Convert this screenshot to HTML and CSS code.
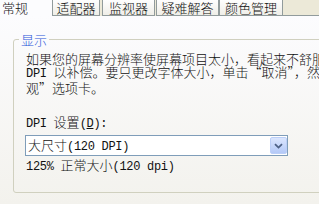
FILE: index.html
```
<!DOCTYPE html>
<html lang="zh-CN">
<head>
<meta charset="utf-8">
<link rel="stylesheet" href="styles.css">
</head>
<body>
<div class="dialog">
  <div class="tabs">
    <div class="tab active">常规</div>
    <div class="tab t-adapter">适配器</div>
    <div class="tab t-monitor">监视器</div>
    <div class="tab t-trouble">疑难解答</div>
    <div class="tab t-color">颜色管理</div>
    <div class="tab-fill"></div>
  </div>
  <div class="panel">
    <section class="group">
      <div class="group-title">显示</div>
      <p class="desc">如果您的屏幕分辨率使屏幕项目太小，看起来不舒服，您可以增加<br><span class="lat">DPI </span>以补偿。要只更改字体大小，单击“取消”，然后转到“外<br>观”选项卡。</p>
      <div class="label"><span class="lat">DPI </span>设置<span class="lat">(<u>D</u>):</span></div>
      <div class="select">
        <span class="value">大尺寸<span class="lat">(120 DPI)</span></span>
        <span class="arrow"><svg width="9" height="6" viewBox="0 0 9 6"><path d="M1 1.2 L4.5 4.6 L8 1.2" fill="none" stroke="#4d6185" stroke-width="1.8"/></svg></span>
      </div>
      <div class="note"><span class="lat">125% </span>正常大小<span class="lat">(120 dpi)</span></div>
    </section>
    <section class="group group2">
      <div class="group-title">兼容性</div>
    </section>
  </div>
</div>
</body>
</html>
```

FILE: styles.css
```
html, body {
  margin: 0;
  padding: 0;
}
body {
  width: 319px;
  height: 204px;
  overflow: hidden;
  background: #fcfcfe;
  font-family: "Noto Sans CJK SC", sans-serif;
  font-size: 13px;
  font-weight: 300;
  line-height: 13px;
  color: #111;
}
.dialog {
  width: 319px;
  height: 204px;
  overflow: hidden;
}
.tabs {
  display: flex;
  height: 16px;
  background: #ece9d8;
}
.tab {
  box-sizing: border-box;
  height: 16px;
  line-height: 15px;
  border: 1px solid #919b9c;
  border-top: none;
  background: linear-gradient(#fefefe, #efeee8);
  text-align: center;
  white-space: nowrap;
  flex: none;
}
.tab.active {
  width: 52px;
  border: none;
  background: #fcfcfe;
  text-align: left;
  padding-left: 2px;
}
.t-adapter { width: 48px; }
.t-monitor { width: 53px; margin-left: 2px; }
.t-trouble { width: 63px; margin-left: 1px; }
.t-color { width: 64px; }
.tab-fill {
  flex: 1;
  border-bottom: 1px solid #919b9c;
}
.panel {
  height: 188px;
  background: linear-gradient(#fcfcfe, #f3f2ed);
  padding-top: 23px;
  box-sizing: border-box;
  overflow: hidden;
}
.group {
  margin: 0 0 0 13px;
  width: 340px;
  box-sizing: border-box;
  border: 1px solid #d0d0bf;
  border-radius: 3px;
  padding: 0 0 18px 12px;
}
.group-title {
  width: fit-content;
  margin: -7px 0 0 -7px;
  padding: 0 2px;
  color: #1f55d8;
  background: #fbfbfd;
  line-height: 13px;
}
.group2 {
  margin-top: 18px;
}
.desc {
  margin: 6px 0 0;
  white-space: nowrap;
}
.lat {
  font-family: "Liberation Mono", monospace;
  font-size: 12px;
  font-weight: 400;
  letter-spacing: -0.3px;
}
.label {
  margin-top: 21px;
  white-space: nowrap;
}
.select {
  margin: 4px 0 0 -1px;
  width: 263px;
  height: 21px;
  box-sizing: border-box;
  border: 1px solid #7f9db9;
  background: #fff;
  display: flex;
  align-items: center;
  padding-left: 2px;
}
.value {
  flex: 1;
  white-space: nowrap;
}
.arrow {
  width: 17px;
  height: 17px;
  box-sizing: border-box;
  border: 1px solid #bccff8;
  border-radius: 2px;
  background: linear-gradient(#dbe6fe, #b4c9f7);
  display: flex;
  align-items: center;
  justify-content: center;
}
.arrow svg {
  display: block;
}
.note {
  margin-top: 2px;
  white-space: nowrap;
}
```
